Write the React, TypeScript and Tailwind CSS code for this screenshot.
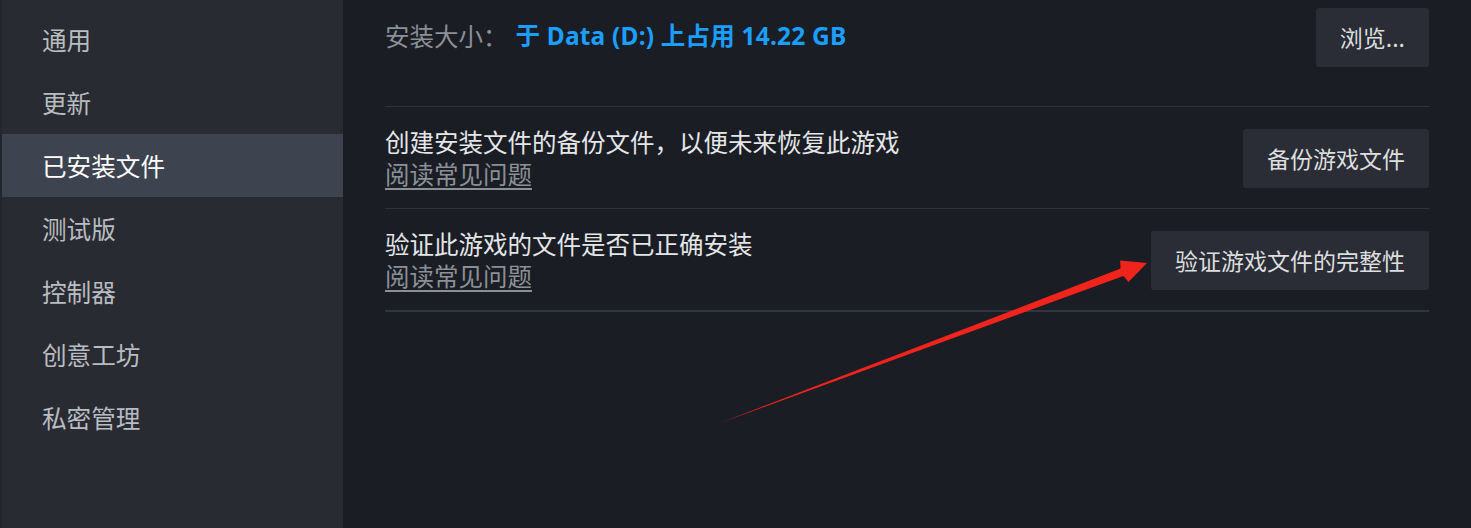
import React from "react";

const font = { fontFamily: '"Noto Sans CJK SC", "Noto Sans", sans-serif' };

const items = ["通用", "更新", "已安装文件", "测试版", "控制器", "创意工坊", "私密管理"];

export default function App() {
  return (
    <div className="relative flex w-[1471px] h-[528px] overflow-hidden bg-[#1a1d23]" style={font}>
      <div className="w-[343px] shrink-0 bg-[#282b32] border-l-2 border-[#23262c] pt-[8px] flex flex-col">
        {items.map((t) => (
          <div
            key={t}
            className={
              "h-[63px] flex items-center pl-[40px] text-[24.6px] " +
              (t === "已安装文件" ? "bg-[#3d4450] text-white" : "text-[#b9bcc0]")
            }
          >
            {t}
          </div>
        ))}
      </div>
      <div className="flex-1 px-[42px] flex flex-col">
        <div className="flex items-center justify-between pt-[8px] pb-[39px] border-b border-[#2f333b]">
          <div className="flex items-center gap-[8px] text-[24.5px] -translate-y-[1px]">
            <span className="text-[#8b8f96]">安装大小：</span>
            <span
              className="text-[#1a9fff] font-bold tracking-[0.2px]"
              style={{ fontFamily: '"Noto Sans", "Noto Sans CJK SC", sans-serif' }}
            >
              于 Data (D:) 上占用 14.22 GB
            </span>
          </div>
          <button className="h-[59px] px-[24px] bg-[#2a2d35] rounded-[3px] text-[23px] text-[#dcdedf]">浏览...</button>
        </div>
        <div className="flex items-center justify-between pt-[19px] pb-[18px] border-b border-[#2f333b]">
          <div className="flex flex-col leading-[32px] text-[24.5px]">
            <span className="text-[#e4e6e8]">创建安装文件的备份文件，以便未来恢复此游戏</span>
            <span className="text-[#8b9097] underline underline-offset-[4px]">阅读常见问题</span>
          </div>
          <button className="h-[59px] px-[24px] bg-[#2a2d35] rounded-[3px] text-[23px] text-[#dcdedf]">备份游戏文件</button>
        </div>
        <div className="flex items-center justify-between pt-[19px] pb-[18px] border-b-2 border-[#31353d]">
          <div className="flex flex-col leading-[32px] text-[24.5px]">
            <span className="text-[#e4e6e8]">验证此游戏的文件是否已正确安装</span>
            <span className="text-[#8b9097] underline underline-offset-[4px]">阅读常见问题</span>
          </div>
          <button className="h-[59px] px-[24px] bg-[#2a2d35] rounded-[3px] text-[23px] text-[#dcdedf]">验证游戏文件的完整性</button>
        </div>
      </div>
      <svg className="absolute left-0 top-0 pointer-events-none" width="1471" height="528">
        <polygon
          points="720,423 1120.6,268.6 1120.1,260.5 1147,263 1128.5,282 1123.4,276"
          fill="#f0241c"
        />
      </svg>
    </div>
  );
}
